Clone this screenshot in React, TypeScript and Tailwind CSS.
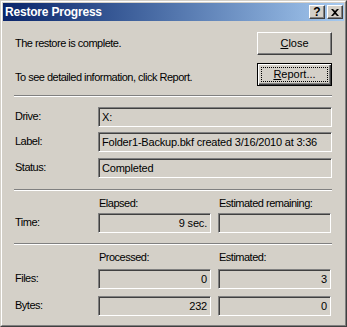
import React from "react"

const font = { fontFamily: '"Liberation Sans", Arial, sans-serif' }

function Field({ value, right, className }: { value?: string; right?: boolean; className?: string }) {
  return (
    <div
      className={`h-[20px] bg-[#d4d0c8] border border-t-[#808080] border-l-[#808080] border-r-white border-b-white shadow-[inset_1px_1px_0_#404040,inset_-1px_-1px_0_#d4d0c8] flex items-center px-[3px] leading-none whitespace-nowrap overflow-hidden tracking-[-0.2px] ${right ? "justify-end" : ""} ${className ?? ""}`}
    >
      {value}
    </div>
  )
}

function Separator() {
  return <div className="h-[2px] border-t border-t-[#808080] border-b border-b-white" />
}

function TitleButton({ children }: { children: React.ReactNode }) {
  return (
    <div className="w-[16px] h-[14px] bg-[#d4d0c8] border border-t-white border-l-white border-r-[#404040] border-b-[#404040] shadow-[inset_-1px_-1px_0_#808080] flex items-center justify-center text-black">
      {children}
    </div>
  )
}

function Row({ label, children, className }: { label: string; children: React.ReactNode; className?: string }) {
  return (
    <div className={`flex items-center h-[20px] ${className ?? ""}`}>
      <div className="w-[84px] pl-[1px] -mt-[2px]">{label}</div>
      <div className="flex-1 flex gap-[7px]">{children}</div>
    </div>
  )
}

export default function App() {
  return (
    <div
      style={font}
      className="w-[347px] h-[327px] bg-[#d4d0c8] border border-t-[#d4d0c8] border-l-[#d4d0c8] border-r-[#404040] border-b-[#404040] text-black"
    >
      <div className="h-full border border-t-white border-l-white border-r-[#808080] border-b-[#808080] p-px flex flex-col">
        {/* title bar */}
        <div className="h-[18px] bg-gradient-to-r from-[#0a246a] to-[#a6caf0] flex items-center justify-between pl-[2px] pr-px">
          <span className="text-white font-bold text-[12px] tracking-[-0.2px]">Restore Progress</span>
          <div className="flex gap-[2px]">
            <TitleButton>
              <span className="text-[12px] font-bold leading-none">?</span>
            </TitleButton>
            <TitleButton>
              <svg width="8" height="7" viewBox="0 0 8 7">
                <path d="M0 0 L2 0 L4 2 L6 0 L8 0 L5 3.5 L8 7 L6 7 L4 5 L2 7 L0 7 L3 3.5 Z" fill="black" />
              </svg>
            </TitleButton>
          </div>
        </div>

        {/* body */}
        <div className="pl-[11px] pr-[12px] text-[11px] tracking-[-0.5px]">
          <div className="flex justify-between pt-[11px] pl-[1px]">
            <div className="flex flex-col">
              <div className="h-[23px] flex items-center">The restore is complete.</div>
              <div className="h-[23px] mt-[8px] pt-[5px] flex items-center">To see detailed information, click Report.</div>
            </div>
            <div className="flex flex-col gap-[8px] w-[75px] tracking-normal">
              <div className="h-[23px] bg-[#d4d0c8] border border-t-white border-l-white border-r-[#404040] border-b-[#404040] shadow-[inset_-1px_-1px_0_#808080] flex items-center justify-center">
                <span>
                  <u>C</u>lose
                </span>
              </div>
              <div className="h-[23px] bg-[#d4d0c8] border border-black shadow-[inset_1px_1px_0_#fff,inset_-1px_-1px_0_#404040,inset_-2px_-2px_0_#808080] p-[3px]">
                <div className="h-full border border-dotted border-black flex items-center justify-center">
                  <span>
                    <u>R</u>eport...
                  </span>
                </div>
              </div>
            </div>
          </div>

          <div className="mt-[9px]">
            <Separator />
          </div>

          <div className="flex flex-col mt-[10px]">
            <Row label="Drive:">
              <Field value="X:" className="flex-1" />
            </Row>
            <Row label="Label:" className="mt-[5px]">
              <Field value="Folder1-Backup.bkf created 3/16/2010 at 3:36" className="flex-1" />
            </Row>
            <Row label="Status:" className="mt-[6px]">
              <Field value="Completed" className="flex-1" />
            </Row>
          </div>

          <div className="mt-[11px]">
            <Separator />
          </div>

          <div className="flex flex-col mt-[5px]">
            <div className="flex h-[14px] items-center pl-[85px] gap-[7px]">
              <div className="w-[113px]">Elapsed:</div>
              <div className="w-[113px]">Estimated remaining:</div>
            </div>
            <Row label="Time:" className="mt-[3px]">
              <Field value="9 sec." right className="w-[113px]" />
              <Field className="w-[113px]" />
            </Row>
          </div>

          <div className="mt-[10px]">
            <Separator />
          </div>

          <div className="flex flex-col mt-[5px]">
            <div className="flex h-[14px] items-center pl-[85px] gap-[7px]">
              <div className="w-[113px]">Processed:</div>
              <div className="w-[113px]">Estimated:</div>
            </div>
            <Row label="Files:" className="mt-[5px]">
              <Field value="0" right className="w-[113px]" />
              <Field value="3" right className="w-[113px]" />
            </Row>
            <Row label="Bytes:" className="mt-[7px]">
              <Field value="232" right className="w-[113px]" />
              <Field value="0" right className="w-[113px]" />
            </Row>
          </div>
        </div>
      </div>
    </div>
  )
}
